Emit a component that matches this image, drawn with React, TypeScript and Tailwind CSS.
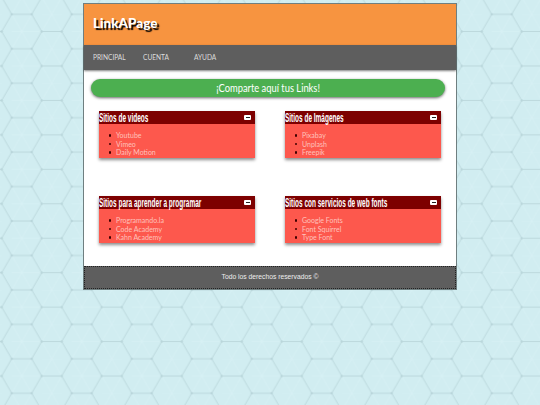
const boxes = [
  { title: "Sitios de videos", items: ["Youtube", "Vimeo", "Daily Motion"] },
  { title: "Sitios de Imágenes", items: ["Pixabay", "Unplash", "Freepik"] },
  { title: "Sitios para aprender a programar", items: ["Programando.la", "Code Academy", "Kahn Academy"] },
  { title: "Sitios con servicios de web fonts", items: ["Google Fonts", "Font Squirrel", "Type Font"] },
];

function Background() {
  return (
    <svg className="fixed inset-0 -z-10 h-full w-full" aria-hidden="true">
      <defs>
        <pattern id="hex" x="11.7" y="14.3" width="60" height="34.45" patternUnits="userSpaceOnUse">
          <path
            d="M0 0L20 34.45M20 0L0 34.45M0 17.22H30M30 17.22L50 -17.22M50 17.22L30 -17.22M30 17.22L40 34.45M50 17.22L40 34.45M30 0H50"
            fill="none"
            stroke="#d9f2f5"
            strokeWidth="0.6"
          />
          <path
            d="M0 0H20L30 17.22H50L60 0M0 34.45H20L30 17.22M50 17.22L60 34.45"
            fill="none"
            stroke="#b9d6db"
            strokeWidth="0.9"
          />
          <g fill="#b9d6db">
            <circle cx="0" cy="0" r="1.3" />
            <circle cx="20" cy="0" r="1.3" />
            <circle cx="60" cy="0" r="1.3" />
            <circle cx="0" cy="34.45" r="1.3" />
            <circle cx="20" cy="34.45" r="1.3" />
            <circle cx="60" cy="34.45" r="1.3" />
            <circle cx="30" cy="17.22" r="1.3" />
            <circle cx="50" cy="17.22" r="1.3" />
          </g>
        </pattern>
      </defs>
      <rect width="100%" height="100%" fill="#d1edf1" />
      <rect width="100%" height="100%" fill="url(#hex)" />
    </svg>
  );
}

function Box({ title, items }: { title: string; items: string[] }) {
  return (
    <section className="h-[47px] bg-[#fd584d] shadow-[0_2px_3px_rgba(0,0,0,0.45)]">
      <h2 className="flex h-[13px] items-center bg-[#7d0000] pr-[4px] font-['Liberation_Sans',sans-serif] text-[12px] font-bold leading-[13px] text-white">
        <span className="w-0 grow pt-[2px]">
          <span className="inline-block origin-left scale-x-[0.54] whitespace-nowrap">{title}</span>
        </span>
        <span className="flex h-[5px] w-[7px] shrink-0 items-center justify-center rounded-[1px] bg-white">
          <span className="h-px w-[4px] bg-[#222]" />
        </span>
      </h2>
      <ul className="pl-[9.5px] pt-[7px] font-['Lato',sans-serif] text-[7px] leading-[8.5px] text-[#ffc2bc]">
        {items.map((i) => (
          <li key={i} className="flex items-center gap-[5px]">
            <span className="h-[2.5px] w-[2.5px] rounded-full bg-[#400000]" />
            {i}
          </li>
        ))}
      </ul>
    </section>
  );
}

export default function App() {
  return (
    <div className="min-h-[405px] pt-[3px]">
      <Background />
      <div className="ml-[83px] w-[374px] border border-[#6f7f80] bg-white">
        <header className="flex h-[41px] items-center bg-[#f79440] pb-[2px] pl-[9px]">
          <h1 className="font-['Lato',sans-serif] text-[13.5px] font-black text-white [text-shadow:2px_2px_1px_#000]">
            LinkAPage
          </h1>
        </header>
        <nav className="flex h-[25px] items-center bg-[#5e5e5e] pl-[9px] font-['Lato',sans-serif] text-[6.6px] text-[#dddddd] shadow-[0_1px_2px_rgba(0,0,0,0.5)]">
          <span className="w-[50px]">PRINCIPAL</span>
          <span className="w-[51px]">CUENTA</span>
          <span>AYUDA</span>
        </nav>
        <main className="h-[196px] pl-[7px] pr-[11px] pt-[9px]">
          <div className="flex h-[18px] items-center justify-center rounded-[9px] bg-[#4caf50] font-['Lato',sans-serif] text-[11px] text-white shadow-[0_1px_3px_rgba(0,0,0,0.6)]">
            <span className="inline-block scale-x-[0.85] whitespace-nowrap">¡Comparte aquí tus Links!</span>
          </div>
          <div className="mt-[14px] grid grid-cols-[156px_156px] gap-x-[30px] gap-y-[38px] pl-[8px]">
            {boxes.map((b) => (
              <Box key={b.title} {...b} />
            ))}
          </div>
        </main>
        <footer className="flex h-[23px] items-center justify-center border border-dotted border-[#222] bg-[#5e5e5e] font-['Liberation_Sans',sans-serif] text-[6.75px] text-[#eeeeee]">
          Todo los derechos reservados ©
        </footer>
      </div>
    </div>
  );
}
